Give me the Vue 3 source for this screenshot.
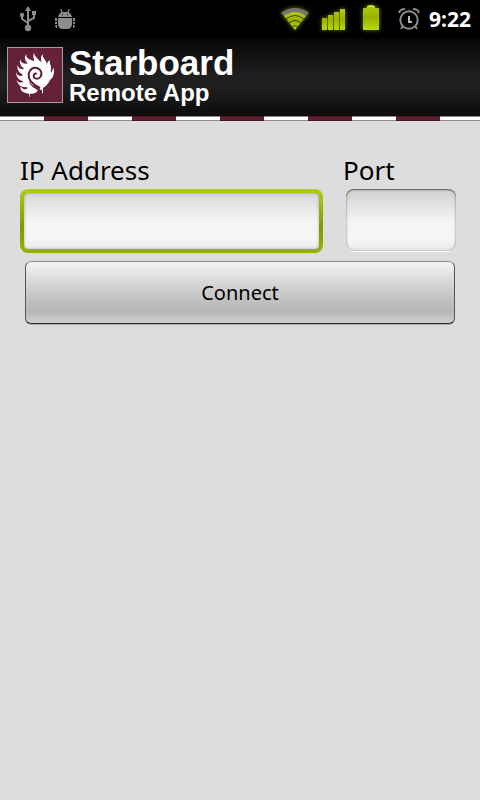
<script setup>
import { ref } from 'vue'

const address = ref('')
const port = ref('')
const vFocus = { mounted: (el) => el.focus() }
</script>

<template>
  <div class="screen">
    <div class="status">
      <div class="group notices">
        <svg class="usb" width="18" height="26" viewBox="0 0 18 26" role="img" aria-label="USB connected">
          <g fill="none" stroke="#8c8c8c" stroke-width="2">
            <path d="M9 21V4M9 17L3 13V9M9 15L15 12V8" />
          </g>
          <g fill="#8c8c8c">
            <path d="M9 0L12 5H6Z" />
            <circle cx="9" cy="22" r="3.2" />
            <circle cx="3" cy="9" r="2.2" />
            <rect x="13" y="5" width="4" height="4" />
          </g>
        </svg>
        <svg class="bug" width="22" height="20" viewBox="0 0 22 20" role="img" aria-label="USB debugging">
          <g fill="#8c8c8c">
            <path d="M4 8C5 4 7 3 11 3S17 4 18 8Z" />
            <path d="M4 9H18V15Q18 20 13 20H9Q4 20 4 15Z" />
            <path d="M1 9H3V12H1ZM1 13H3V15H1ZM1 16H3V19H2ZM19 9H21V12H19ZM19 13H21V15H19ZM19 16H21L20 19H19Z" />
          </g>
          <path d="M7 0L8 4M15 0L14 4" stroke="#8c8c8c" stroke-width="1.3" />
          <path d="M8 5H9V6H8ZM13 5H14V6H13Z" fill="#000" />
        </svg>
      </div>
      <div class="group system">
        <svg class="glow" width="30" height="24" viewBox="0 0 30 24" role="img" aria-label="Wi-Fi">
          <defs>
            <linearGradient id="lime" x1="0" y1="0" x2="0" y2="1">
              <stop offset="0" stop-color="#b4cb10" />
              <stop offset="0.5" stop-color="#9bb000" />
              <stop offset="1" stop-color="#b5dc0b" />
            </linearGradient>
          </defs>
          <path d="M1 6Q15 -4 29 6L25 10Q15 2 5 10Z" fill="#747474" />
          <path d="M4 9Q15 1 26 9L15 23Z" fill="url(#lime)" />
          <path d="M6 12Q15 5 24 12M9 16Q15 11 21 16M12 20Q15 17 18 20" fill="none" stroke="#354000" stroke-width="1" />
        </svg>
        <svg class="glow signal" width="24" height="22" viewBox="0 0 24 22" role="img" aria-label="Signal strength">
          <path d="M0 9H5V21H0ZM6 6H11V21H6ZM12 3H17V21H12ZM18 0H23V21H18Z" fill="url(#lime)" />
        </svg>
        <svg class="glow battery" width="18" height="26" viewBox="0 0 18 26" role="img" aria-label="Battery full">
          <path d="M5 1Q9 -1 13 1V3H16Q17 3 17 4V24Q17 25 16 25H2Q1 25 1 24V4Q1 3 2 3H5Z" fill="url(#lime)" />
          <path d="M5 2Q9 0 13 2" fill="none" stroke="#d4ed45" />
        </svg>
        <svg class="alarm" width="22" height="23" viewBox="0 0 22 23" role="img" aria-label="Alarm set">
          <g fill="none" stroke="#8c8c8c" stroke-width="2">
            <circle cx="11" cy="12" r="8.7" />
            <path d="M1 5Q2 1 7 1M21 5Q20 1 15 1M5 18L3 21M17 18L19 21" />
            <path d="M11 8V14H14" stroke="#bbb" />
          </g>
        </svg>
        <time class="clock">9:22</time>
      </div>
    </div>

    <header class="header">
      <svg class="logo" width="56" height="56" viewBox="21 21 168 168" aria-hidden="true">
        <defs>
          <pattern id="hatch" width="8" height="8" patternUnits="userSpaceOnUse" patternTransform="rotate(-45)">
            <rect width="8" height="8" fill="#601c30" />
            <rect width="8" height="3" fill="#6d293d" />
          </pattern>
        </defs>
        <rect x="22.5" y="22.5" width="165" height="165" fill="url(#hatch)" stroke="#a99ba0" stroke-width="3" />
        <g fill="#fff">
          <path d="M70 88C76 66 98 58 120 64C143 70 155 89 154 106C152 122 142 136 132 142L122 151L115 143C102 139 92 133 87 122C88 133 98 142 113 150C113 158 99 163 86 161C69 159 59 151 62 139C67 149 78 151 83 143C67 134 63 108 70 88Z" />
          <path d="M79 42C77 55 88 58 101 63L90 74C76 66 70 54 79 42Z" />
          <path d="M103 38C101 48 113 52 121 66L102 70C106 59 95 50 103 38Z" />
          <path d="M129 43C126 55 138 58 140 70C140 78 133 83 124 75C127 63 117 53 129 43Z" />
          <path d="M151 59C145 69 156 75 153 88C151 98 143 100 135 90C143 79 136 68 151 59Z" />
          <path d="M160 82C165 101 161 116 144 123L142 101C153 101 158 94 160 82Z" />
          <path d="M61 57C62 70 73 73 90 70L78 88C66 84 56 72 61 57Z" />
          <path d="M53 74C55 88 66 90 82 86L73 104C57 101 50 88 53 74Z" />
          <path d="M48 96C51 109 61 110 77 105L75 124C56 124 48 109 48 96Z" />
          <path d="M50 119C55 130 64 129 78 123L83 141C65 144 52 134 50 119Z" />
          <path d="M87 159H89V170H87ZM126 139H129V160H126Z" />
        </g>
        <path d="M120 144C98 134 84 119 86 102C88 88 100 81 111 84C124 88 128 101 121 111C115 119 102 117 101 108C101 102 106 99 110 102" fill="none" stroke="#601c30" stroke-width="6" />
      </svg>
      <h1 class="title">
        <span class="name">Starboard</span>
        <span class="tagline">Remote App</span>
      </h1>
    </header>
    <div class="stripe"></div>

    <form class="form" @submit.prevent>
      <div class="fields">
        <div class="field">
          <label for="address">IP Address</label>
          <input id="address" v-model="address" v-focus class="box address" type="text" autocomplete="off">
        </div>
        <div class="field">
          <label for="port">Port</label>
          <input id="port" v-model="port" class="box port" type="text" inputmode="numeric" autocomplete="off">
        </div>
      </div>
      <button class="connect" type="submit">Connect</button>
    </form>
  </div>
</template>

<style>
body {
  background: #ddd;
}
</style>

<style scoped>
.screen {
  min-height: 100vh;
  background: #ddd;
  color: #000;
  font-family: "Noto Sans", "Open Sans", sans-serif;
}

.screen * {
  box-sizing: border-box;
}

.status {
  display: flex;
  justify-content: space-between;
  align-items: center;
  height: 38px;
  padding: 0 9px 0 19px;
  background: #000;
}

.group {
  display: flex;
  align-items: center;
}

.notices {
  gap: 17px;
}

.system {
  gap: 12px;
}

.glow {
  filter: drop-shadow(0 0 2px #6c8000);
}

.signal {
  margin-top: 2px;
}

.battery {
  margin: 0 6px 2px 4px;
}

.clock {
  margin-left: -3px;
  color: #fff;
  font-size: 21px;
  font-weight: 700;
  line-height: 24px;
}

.header {
  display: flex;
  gap: 6px;
  height: 78px;
  padding: 9px 7px;
  background: linear-gradient(#060606, #202020 50%, #1e1e1e 65%, #0b0b0b);
}

.logo {
  flex: none;
}

.title {
  display: flex;
  flex-direction: column;
  margin: 0;
  color: #fff;
  font-family: "Liberation Sans", Arial, sans-serif;
  font-weight: 700;
}

.name {
  font-size: 35px;
  line-height: 32px;
}

.tagline {
  font-size: 24px;
  line-height: 28px;
}

.stripe {
  height: 5px;
  border: solid rgba(40, 20, 20, 0.5);
  border-width: 1px 0;
  background: repeating-linear-gradient(90deg, #fff 0 44px, #641c2e 44px 88px) border-box;
}

.form {
  padding: 32px 20px;
}

.fields {
  display: grid;
  grid-template-columns: 1fr 117px;
  gap: 20px;
}

.field {
  display: flex;
  flex-direction: column;
}

label {
  padding-bottom: 2px;
  font-size: 26px;
  line-height: 34px;
}

.box {
  width: 100%;
  padding: 0 12px;
  border: 0;
  outline: 0;
  color: #000;
  font: 24px "Noto Sans", sans-serif;
  caret-color: transparent;
}

.address {
  height: 64px;
  border: 4px solid transparent;
  border-radius: 8px;
  background:
    linear-gradient(#d8d8d8, #f4f4f4 50%, #f6f6f6 80%, #ececec) padding-box,
    linear-gradient(#b3cc12, #819900 60%, #95b400) border-box;
  box-shadow: inset 0 0 3px rgba(0, 0, 0, 0.3);
}

.port {
  width: auto;
  height: 62px;
  margin: 0 4px 0 3px;
  border-radius: 8px;
  background: linear-gradient(#cfcfcf, #f3f3f3 50%, #f6f6f6 80%, #e9e9e9);
  box-shadow: inset 0 1px 1px #666, inset 0 0 3px rgba(0, 0, 0, 0.35), 0 1px 0 #fafafa;
}

.connect {
  display: block;
  width: calc(100% - 10px);
  height: 63px;
  margin: 8px 5px 0;
  padding: 0;
  border: 1px solid;
  border-color: #8c8c8c #555 #2e2e2e;
  border-radius: 6px;
  background: linear-gradient(#f4f4f4, #dcdcdc 28%, #b8b8b8 75%, #b8b8b8 83%, #d0d0d0);
  color: #000;
  font: 20px "Noto Sans", sans-serif;
  box-shadow: 0 1px 0 #aaa;
}
</style>
